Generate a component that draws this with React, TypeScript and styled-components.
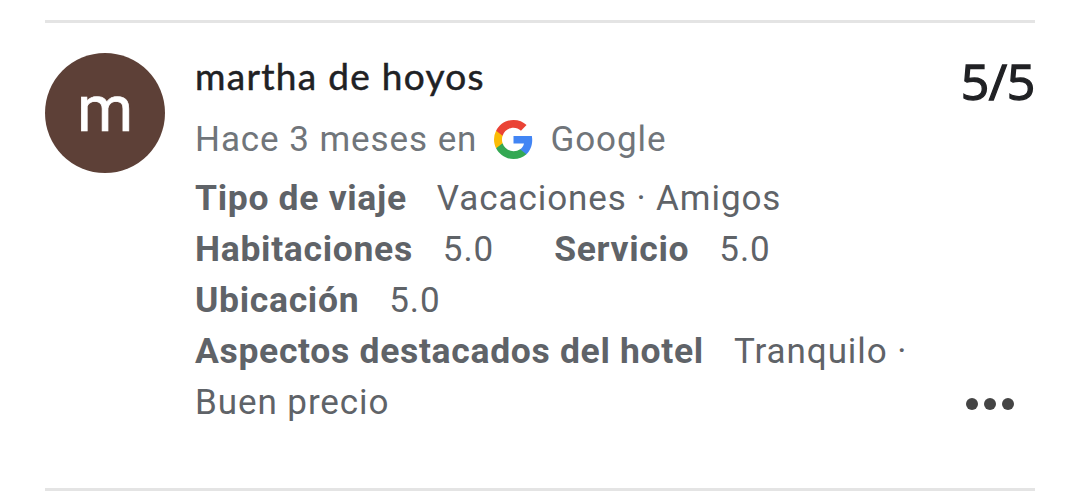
import React from 'react';
import styled, { createGlobalStyle } from 'styled-components';

// Styles
const GlobalStyle = createGlobalStyle`
  * {
    box-sizing: border-box;
  }

  body {
    margin: 0;
    background: #fff;
    font-family: Roboto, sans-serif;
  }
`;

const Page = styled.main`
  height: 504px;
  padding: 20px 45px 0;
  overflow: hidden;
`;

const Review = styled.article`
  display: flex;
  height: 471px;
  padding-top: 30px;
  border-top: 3px solid #e4e4e4;
  border-bottom: 3px solid #e4e4e4;
`;

const Avatar = styled.div`
  flex: none;
  width: 120px;
  height: 120px;
  margin-right: 30px;
  border-radius: 50%;
  background: #5d4037;
  color: #fff;
  font-size: 64px;
  line-height: 113px;
  text-align: center;
  -webkit-text-stroke: 0.7px #fff;
`;

const Content = styled.div`
  width: 740px;
`;

const Author = styled.h3`
  margin: 0;
  font-family: Lato, sans-serif;
  font-size: 37px;
  font-weight: 400;
  line-height: 46px;
  letter-spacing: 1.3px;
  color: #202124;
  -webkit-text-stroke: 0.5px #202124;
`;

const Source = styled.div`
  display: flex;
  align-items: center;
  height: 74px;
  padding-top: 6px;
  font-size: 35px;
  letter-spacing: 0.93px;
  color: #70757a;

  svg {
    margin: 0 17px;
  }
`;

const Line = styled.div`
  display: flex;
  height: 51px;
  font-size: 35px;
  line-height: 51px;
  letter-spacing: 0.93px;
  white-space: pre;
  color: #5f6368;
`;

const Label = styled.b<{ $gap?: number }>`
  margin-left: ${({ $gap = 0 }) => $gap}px;
  margin-right: 30px;
  font-size: 35.5px;
  letter-spacing: 0.68px;
`;

const Aside = styled.div`
  display: flex;
  flex: 1;
  flex-direction: column;
  justify-content: space-between;
  align-items: flex-end;
`;

const Score = styled.div`
  font-family: 'Open Sans', sans-serif;
  font-size: 50px;
  font-weight: 400;
  line-height: 56px;
  letter-spacing: -0.4px;
  color: #202124;
  -webkit-text-stroke: 1.3px #202124;
`;

const More = styled.button`
  display: flex;
  gap: 6px;
  margin: 0 21px 78px 0;
  padding: 0;
  border: 0;
  background: none;
`;

const Dot = styled.span`
  width: 12px;
  height: 12px;
  border-radius: 50%;
  background: #444;
`;

const GoogleLogo: React.FC = () => (
  <svg width="39" height="39" viewBox="1 1 22 22">
    <path fill="#4285f4" d="M22.56 12.25c0-.78-.07-1.53-.2-2.25H12v4.26h5.92c-.26 1.37-1.04 2.53-2.21 3.31v2.77h3.57c2.08-1.92 3.28-4.74 3.28-8.09z" />
    <path fill="#34a853" d="M12 23c2.97 0 5.46-.98 7.28-2.66l-3.57-2.77c-.98.66-2.23 1.06-3.71 1.06-2.86 0-5.29-1.93-6.16-4.53H2.18v2.84C3.99 20.53 7.7 23 12 23z" />
    <path fill="#fbbc05" d="M5.84 14.09c-.22-.66-.35-1.36-.35-2.09s.13-1.43.35-2.09V7.07H2.18A10.96 10.96 0 0 0 1 12c0 1.78.43 3.45 1.18 4.93l3.66-2.84z" />
    <path fill="#ea4335" d="M12 5.38c1.62 0 3.06.56 4.21 1.64l3.15-3.15C17.45 2.09 14.97 1 12 1 7.7 1 3.99 3.47 2.18 7.07l3.66 2.84c.87-2.6 3.3-4.53 6.16-4.53z" />
  </svg>
);

const App: React.FC = () => {
  return (
    <>
      <GlobalStyle />
      <Page>
        <Review>
          <Avatar>m</Avatar>
          <Content>
            <Author>martha de hoyos</Author>
            <Source>
              <span>Hace 3 meses en</span>
              <GoogleLogo />
              <span>Google</span>
            </Source>
            <Line>
              <Label>Tipo de viaje</Label>
              <span>Vacaciones · Amigos</span>
            </Line>
            <Line>
              <Label>Habitaciones</Label>
              <span>5.0</span>
              <Label $gap={60}>Servicio</Label>
              <span>5.0</span>
            </Line>
            <Line>
              <Label>Ubicación</Label>
              <span>5.0</span>
            </Line>
            <Line>
              <Label>Aspectos destacados del hotel</Label>
              <span>Tranquilo ·</span>
            </Line>
            <Line>Buen precio</Line>
          </Content>
          <Aside>
            <Score>5/5</Score>
            <More aria-label="Más opciones">
              <Dot />
              <Dot />
              <Dot />
            </More>
          </Aside>
        </Review>
      </Page>
    </>
  );
};

export default App;
